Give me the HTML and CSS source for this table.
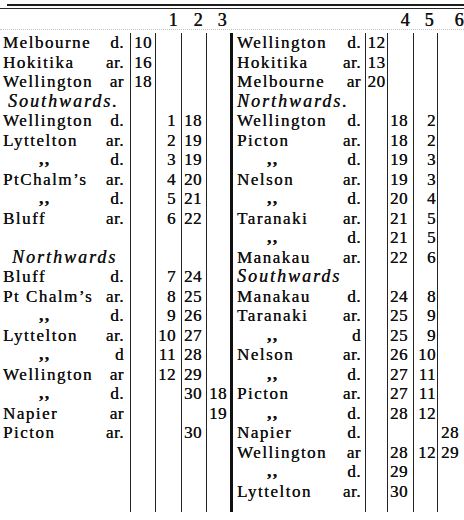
FILE: index.html
```html
<!DOCTYPE html>
<html lang="en">
<head>
<meta charset="utf-8">
<title>Timetable</title>
<link rel="stylesheet" href="styles.css">
</head>
<body>
<div class="sheet">
  <div class="rule-top"></div>
  <div class="rule-sub"></div>
  <div class="row head">
    <div class="c"></div><div class="c"></div><div class="c">1</div><div class="c">2</div><div class="c">3</div>
    <div class="c"></div><div class="c"></div><div class="c">4</div><div class="c">5</div><div class="c">6</div>
  </div>
  <div class="body">
    <div class="row">
      <div class="c nm"><span>Melbourne</span><span>d.</span></div><div class="c">10</div><div class="c"></div><div class="c"></div><div class="c"></div>
      <div class="c nm"><span>Wellington</span><span>d.</span></div><div class="c">12</div><div class="c"></div><div class="c"></div><div class="c"></div>
    </div>
    <div class="row">
      <div class="c nm"><span>Hokitika</span><span>ar.</span></div><div class="c">16</div><div class="c"></div><div class="c"></div><div class="c"></div>
      <div class="c nm"><span>Hokitika</span><span>ar.</span></div><div class="c">13</div><div class="c"></div><div class="c"></div><div class="c"></div>
    </div>
    <div class="row">
      <div class="c nm"><span>Wellington</span><span>ar</span></div><div class="c">18</div><div class="c"></div><div class="c"></div><div class="c"></div>
      <div class="c nm"><span>Melbourne</span><span>ar</span></div><div class="c">20</div><div class="c"></div><div class="c"></div><div class="c"></div>
    </div>
    <div class="row">
      <div class="c nm sec s1">Southwards.</div><div class="c"></div><div class="c"></div><div class="c"></div><div class="c"></div>
      <div class="c nm sec s2">Northwards.</div><div class="c"></div><div class="c"></div><div class="c"></div><div class="c"></div>
    </div>
    <div class="row">
      <div class="c nm"><span>Wellington</span><span>d.</span></div><div class="c"></div><div class="c">1</div><div class="c">18</div><div class="c"></div>
      <div class="c nm"><span>Wellington</span><span>d.</span></div><div class="c"></div><div class="c">18</div><div class="c">2</div><div class="c"></div>
    </div>
    <div class="row">
      <div class="c nm"><span>Lyttelton</span><span>ar.</span></div><div class="c"></div><div class="c">2</div><div class="c">19</div><div class="c"></div>
      <div class="c nm"><span>Picton</span><span>ar.</span></div><div class="c"></div><div class="c">18</div><div class="c">2</div><div class="c"></div>
    </div>
    <div class="row">
      <div class="c nm"><span class="dit">,,</span><span>d.</span></div><div class="c"></div><div class="c">3</div><div class="c">19</div><div class="c"></div>
      <div class="c nm"><span class="dit">,,</span><span>d.</span></div><div class="c"></div><div class="c">19</div><div class="c">3</div><div class="c"></div>
    </div>
    <div class="row">
      <div class="c nm"><span>PtChalm’s</span><span>ar.</span></div><div class="c"></div><div class="c">4</div><div class="c">20</div><div class="c"></div>
      <div class="c nm"><span>Nelson</span><span>ar.</span></div><div class="c"></div><div class="c">19</div><div class="c">3</div><div class="c"></div>
    </div>
    <div class="row">
      <div class="c nm"><span class="dit">,,</span><span>d.</span></div><div class="c"></div><div class="c">5</div><div class="c">21</div><div class="c"></div>
      <div class="c nm"><span class="dit">,,</span><span>d.</span></div><div class="c"></div><div class="c">20</div><div class="c">4</div><div class="c"></div>
    </div>
    <div class="row">
      <div class="c nm"><span>Bluff</span><span>ar.</span></div><div class="c"></div><div class="c">6</div><div class="c">22</div><div class="c"></div>
      <div class="c nm"><span>Taranaki</span><span>ar.</span></div><div class="c"></div><div class="c">21</div><div class="c">5</div><div class="c"></div>
    </div>
    <div class="row">
      <div class="c nm"></div><div class="c"></div><div class="c"></div><div class="c"></div><div class="c"></div>
      <div class="c nm"><span class="dit">,,</span><span>d.</span></div><div class="c"></div><div class="c">21</div><div class="c">5</div><div class="c"></div>
    </div>
    <div class="row">
      <div class="c nm sec s3">Northwards</div><div class="c"></div><div class="c"></div><div class="c"></div><div class="c"></div>
      <div class="c nm"><span>Manakau</span><span>ar.</span></div><div class="c"></div><div class="c">22</div><div class="c">6</div><div class="c"></div>
    </div>
    <div class="row">
      <div class="c nm"><span>Bluff</span><span>d.</span></div><div class="c"></div><div class="c">7</div><div class="c">24</div><div class="c"></div>
      <div class="c nm sec s4">Southwards</div><div class="c"></div><div class="c"></div><div class="c"></div><div class="c"></div>
    </div>
    <div class="row">
      <div class="c nm"><span>Pt Chalm’s</span><span>ar.</span></div><div class="c"></div><div class="c">8</div><div class="c">25</div><div class="c"></div>
      <div class="c nm"><span>Manakau</span><span>d.</span></div><div class="c"></div><div class="c">24</div><div class="c">8</div><div class="c"></div>
    </div>
    <div class="row">
      <div class="c nm"><span class="dit">,,</span><span>d.</span></div><div class="c"></div><div class="c">9</div><div class="c">26</div><div class="c"></div>
      <div class="c nm"><span>Taranaki</span><span>ar.</span></div><div class="c"></div><div class="c">25</div><div class="c">9</div><div class="c"></div>
    </div>
    <div class="row">
      <div class="c nm"><span>Lyttelton</span><span>ar.</span></div><div class="c"></div><div class="c">10</div><div class="c">27</div><div class="c"></div>
      <div class="c nm"><span class="dit">,,</span><span>d</span></div><div class="c"></div><div class="c">25</div><div class="c">9</div><div class="c"></div>
    </div>
    <div class="row">
      <div class="c nm"><span class="dit">,,</span><span>d</span></div><div class="c"></div><div class="c">11</div><div class="c">28</div><div class="c"></div>
      <div class="c nm"><span>Nelson</span><span>ar.</span></div><div class="c"></div><div class="c">26</div><div class="c">10</div><div class="c"></div>
    </div>
    <div class="row">
      <div class="c nm"><span>Wellington</span><span>ar</span></div><div class="c"></div><div class="c">12</div><div class="c">29</div><div class="c"></div>
      <div class="c nm"><span class="dit">,,</span><span>d.</span></div><div class="c"></div><div class="c">27</div><div class="c">11</div><div class="c"></div>
    </div>
    <div class="row">
      <div class="c nm"><span class="dit">,,</span><span>d.</span></div><div class="c"></div><div class="c"></div><div class="c">30</div><div class="c">18</div>
      <div class="c nm"><span>Picton</span><span>ar.</span></div><div class="c"></div><div class="c">27</div><div class="c">11</div><div class="c"></div>
    </div>
    <div class="row">
      <div class="c nm"><span>Napier</span><span>ar</span></div><div class="c"></div><div class="c"></div><div class="c"></div><div class="c">19</div>
      <div class="c nm"><span class="dit">,,</span><span>d.</span></div><div class="c"></div><div class="c">28</div><div class="c">12</div><div class="c"></div>
    </div>
    <div class="row">
      <div class="c nm"><span>Picton</span><span>ar.</span></div><div class="c"></div><div class="c"></div><div class="c">30</div><div class="c"></div>
      <div class="c nm"><span>Napier</span><span>d.</span></div><div class="c"></div><div class="c"></div><div class="c"></div><div class="c">28</div>
    </div>
    <div class="row">
      <div class="c nm"></div><div class="c"></div><div class="c"></div><div class="c"></div><div class="c"></div>
      <div class="c nm"><span>Wellington</span><span>ar</span></div><div class="c"></div><div class="c">28</div><div class="c">12</div><div class="c">29</div>
    </div>
    <div class="row">
      <div class="c nm"></div><div class="c"></div><div class="c"></div><div class="c"></div><div class="c"></div>
      <div class="c nm"><span class="dit">,,</span><span>d.</span></div><div class="c"></div><div class="c">29</div><div class="c"></div><div class="c"></div>
    </div>
    <div class="row">
      <div class="c nm"></div><div class="c"></div><div class="c"></div><div class="c"></div><div class="c"></div>
      <div class="c nm"><span>Lyttelton</span><span>ar.</span></div><div class="c"></div><div class="c">30</div><div class="c"></div><div class="c"></div>
    </div>
    <div class="row tail">
      <div class="c"></div><div class="c"></div><div class="c"></div><div class="c"></div><div class="c"></div>
      <div class="c"></div><div class="c"></div><div class="c"></div><div class="c"></div><div class="c"></div>
    </div>
  </div>
</div>
</body>
</html>
```
FILE: styles.css
```css
html, body {
  margin: 0;
  padding: 0;
  background: #ffffff;
}

body {
  color: #111111;
  font-family: "Liberation Serif", "Times New Roman", serif;
  font-size: 17px;
}

.sheet {
  width: 464px;
  padding-top: 4px;
}

.rule-top {
  margin-left: 7px;
  border-top: 2px solid #1e1e1e;
}

.rule-sub {
  margin-top: 2px;
  border-top: 1px solid #2a2a2a;
}

.row {
  display: grid;
  grid-template-columns: 130px 25px 26px 25px 24px 135px 22px 26px 24px 27px;
  height: 19.5px;
  line-height: 19.5px;
}

.c {
  box-sizing: border-box;
  white-space: nowrap;
  overflow: visible;
  letter-spacing: 0.5px;
  text-shadow: 0.15px 0 0 #111111;
}

/* header */
.head {
  height: 20px;
  line-height: 22px;
  border-bottom: 1px dotted #c4c4c4;
  font-size: 18px;
}

.head .c {
  text-align: right;
  padding-right: 3px;
  text-shadow: 0.4px 0 0 #111111;
}

.head .c:nth-child(10) {
  padding-right: 0;
}

.body {
  margin-top: 3px;
}

/* vertical rules */
.body .c:nth-child(n+2) {
  border-left: 1px solid #242424;
}

.body .c:nth-child(6) {
  border-left: 3px solid #111111;
}

/* numeric columns */
.body .c:nth-child(2),
.body .c:nth-child(7) {
  text-align: center;
}

.body .c:nth-child(3) {
  text-align: right;
  padding-right: 5px;
}

.body .c:nth-child(4),
.body .c:nth-child(8) {
  text-align: left;
  padding-left: 2px;
}

.body .c:nth-child(5) {
  text-align: left;
  padding-left: 2px;
}

.body .c:nth-child(9) {
  text-align: right;
  padding-right: 1px;
}

.body .c:nth-child(10) {
  text-align: left;
  padding-left: 3px;
}

/* station name cells */
.nm {
  display: flex;
  justify-content: space-between;
  padding-left: 3px;
  padding-right: 6px;
}

.nm span:first-child {
  letter-spacing: 1.5px;
}

.body .nm:nth-child(6) {
  padding-left: 4px;
  padding-right: 4px;
}

.dit {
  padding-left: 36px;
  font-weight: bold;
  vertical-align: -2px;
}

.body .nm:nth-child(6) .dit {
  padding-left: 30px;
}

.sec {
  display: block;
  font-style: italic;
  font-size: 18px;
  letter-spacing: 2px;
}

.s1 { padding-left: 8px; }
.s2 { padding-left: 12px; }
.s3 { padding-left: 12px; }
.s4 { padding-left: 9px; }

.tail {
  height: 11px;
}
```
